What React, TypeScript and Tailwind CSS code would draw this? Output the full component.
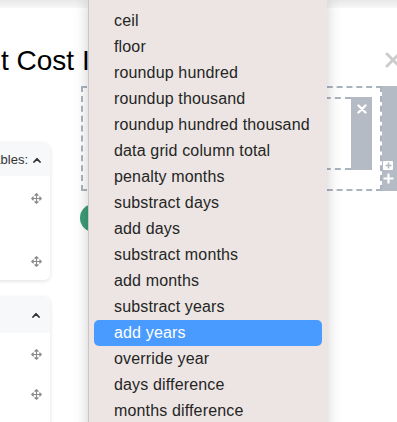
import React from "react";
import { FaArrowsAlt } from "react-icons/fa";

const items = [
  "round",
  "ceil",
  "floor",
  "roundup hundred",
  "roundup thousand",
  "roundup hundred thousand",
  "data grid column total",
  "penalty months",
  "substract days",
  "add days",
  "substract months",
  "add months",
  "substract years",
  "add years",
  "override year",
  "days difference",
  "months difference",
  "years difference",
];

function Chevron() {
  return (
    <svg width="8" height="6" viewBox="0 0 8 6" className="shrink-0">
      <path d="M1 5 L4 1.8 L7 5" fill="none" stroke="#333" strokeWidth="1.8" strokeLinecap="round" strokeLinejoin="round" />
    </svg>
  );
}

function Move() {
  return <FaArrowsAlt className="w-[11px] h-[11px] text-[#8c8c8c]" />;
}

export default function App() {
  return (
    <div className="relative w-[397px] h-[422px] overflow-hidden bg-white font-['Liberation_Sans',Arial,sans-serif]">
      <div className="h-[8px] bg-gradient-to-b from-[#e8e8e8] to-[#f7f7f7]" />
      <div className="flex items-start justify-between h-[78px] pt-[38px]">
        <div className="ml-[1px] text-[28px] leading-[30px] text-black whitespace-nowrap">t Cost Items</div>
        <svg width="16" height="16" viewBox="0 0 16 16" className="mt-[6px] mr-[-4px] shrink-0">
          <path d="M2 2 L14 14 M14 2 L2 14" stroke="#cccccc" strokeWidth="3" strokeLinecap="round" />
        </svg>
      </div>
      <div className="flex">
        <div className="w-[50px] shrink-0 flex flex-col pt-[57px] gap-[17px]">
          <div className="ml-[-150px] w-[200px] h-[137px] rounded-md bg-white shadow-[0_1px_4px_rgba(0,0,0,0.13)] flex flex-col overflow-hidden">
            <div className="h-[33px] bg-[#f7f8fa] flex items-center justify-end gap-[5px] pr-[9px] text-[13px] text-[#333]">
              <span>Custom Variables:</span>
              <Chevron />
            </div>
            <div className="flex flex-col items-end pr-[8px]">
              <div className="mt-[17px]"><Move /></div>
              <div className="mt-[52px]"><Move /></div>
            </div>
          </div>
          <div className="ml-[-150px] w-[200px] h-[160px] rounded-md bg-white shadow-[0_1px_4px_rgba(0,0,0,0.13)] flex flex-col overflow-hidden">
            <div className="h-[36px] bg-[#f7f8fa] flex items-center justify-end pr-[10px]">
              <Chevron />
            </div>
            <div className="flex flex-col items-end pr-[8px]">
              <div className="mt-[16px]"><Move /></div>
              <div className="mt-[29px]"><Move /></div>
            </div>
          </div>
        </div>
        <div className="ml-[31px] flex flex-col">
          <div className="flex">
            <div className="w-[301px] h-[105px] shrink-0 border-2 border-dashed border-[#aab4bf] pt-[9px] pr-[8px] flex flex-col items-end">
              <div className="flex w-[260px] h-[73px]">
                <div className="flex-1 border-2 border-r-0 border-dashed border-[#aab4bf]" />
                <div className="w-[21px] bg-[#b4bbc4] flex justify-center pt-[7px]">
                  <svg width="10" height="10" viewBox="0 0 10 10">
                    <path d="M1.5 1.5 L8.5 8.5 M8.5 1.5 L1.5 8.5" stroke="#fff" strokeWidth="2.4" strokeLinecap="round" />
                  </svg>
                </div>
              </div>
            </div>
            <div className="w-[20px] h-[105px] shrink-0 bg-[#b4bbc4] flex flex-col justify-end gap-[3px] pl-[1px] pb-[7px]">
              <div className="w-[10px] h-[9px] bg-white rounded-[1px] flex items-center justify-center">
                <svg width="7" height="7" viewBox="0 0 7 7">
                  <path d="M3.5 0.5 V6.5 M0.5 3.5 H6.5" stroke="#b4bbc4" strokeWidth="1.6" />
                </svg>
              </div>
              <svg width="11" height="11" viewBox="0 0 11 11">
                <path d="M5.5 0.5 V10.5 M0.5 5.5 H10.5" stroke="#fff" strokeWidth="2.2" />
              </svg>
            </div>
          </div>
          <div className="ml-[-1px] mt-[13px] h-[28px] w-[120px] rounded-full bg-[#3d9c78]" />
        </div>
      </div>

      <div className="absolute left-[88px] top-0 w-[239px] h-[440px] bg-[#ece5e3] border-l border-[#cbc6c4] shadow-[0_0_14px_rgba(0,0,0,0.2)]">
        <div className="mt-[-18px] flex flex-col">
          {items.map((t) => (
            <div
              key={t}
              className={
                t === "add years"
                  ? "h-[26px] mx-[5px] pl-[20px] flex items-center rounded-[5px] bg-[#4a9bff] text-white text-[16px] tracking-[0.15px] whitespace-nowrap"
                  : "h-[26px] mx-[5px] pl-[20px] flex items-center rounded-[5px] text-[#252525] text-[16px] tracking-[0.15px] whitespace-nowrap"
              }
            >
              {t}
            </div>
          ))}
        </div>
      </div>
    </div>
  );
}
